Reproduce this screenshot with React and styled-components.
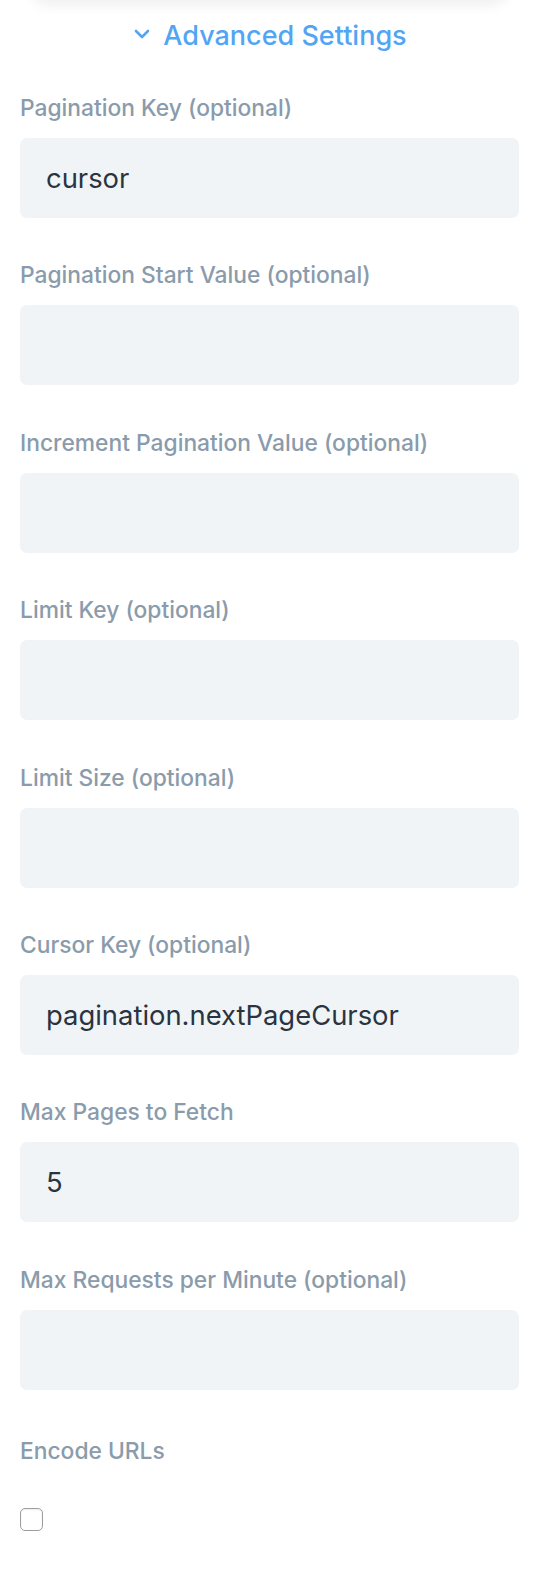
import React from "react";
import styled, { createGlobalStyle } from "styled-components";

const GlobalStyle = createGlobalStyle`
  * { box-sizing: border-box; }
  body {
    margin: 0;
    background: #ffffff;
    font-family: Inter, "Noto Sans", sans-serif;
  }
`;

const Page = styled.div`
  padding: 0 25px 0 20px;
  overflow: hidden;
`;

const CardEdge = styled.div`
  height: 40px;
  margin: -40px 12px 0;
  background: #ffffff;
  border-radius: 16px;
  box-shadow: 0 4px 14px rgba(15, 23, 42, 0.08);
`;

const Toggle = styled.button`
  display: flex;
  align-items: center;
  justify-content: center;
  gap: 11px;
  width: 100%;
  margin-top: 18px;
  padding: 0;
  border: none;
  background: none;
  color: #52a5f5;
  font-family: inherit;
  font-size: 27px;
  font-weight: 500;
  line-height: 36px;
  cursor: pointer;

  svg {
    width: 20px;
    height: 20px;
    margin-top: -4px;
  }
`;

const Fields = styled.div`
  display: flex;
  flex-direction: column;
  gap: 43.4px;
  margin-top: 40px;
`;

const Field = styled.div`
  display: flex;
  flex-direction: column;
  gap: 16px;
  margin-top: ${(p) => (p.$extra ? "4px" : "0")};
`;

const Label = styled.label`
  color: #8a9bab;
  font-size: 22.8px;
  font-weight: 500;
  line-height: 28px;
`;

const Input = styled.input`
  width: 100%;
  height: 80px;
  padding: 0 26px;
  border: none;
  border-radius: 7px;
  background: #f0f4f7;
  color: #2a3441;
  font-family: inherit;
  font-size: 27.4px;
  outline: none;
`;

const Check = styled.input`
  appearance: none;
  width: 23px;
  height: 23px;
  margin: 27px 0 0;
  border: 1px solid #9d9d9d;
  border-radius: 5px;
  background: #ffffff;
  box-shadow: inset 0 1px 2px rgba(0, 0, 0, 0.08);
`;

const fields = [
  { label: "Pagination Key (optional)", value: "cursor" },
  { label: "Pagination Start Value (optional)", value: "" },
  { label: "Increment Pagination Value (optional)", value: "" },
  { label: "Limit Key (optional)", value: "" },
  { label: "Limit Size (optional)", value: "" },
  { label: "Cursor Key (optional)", value: "pagination.nextPageCursor" },
  { label: "Max Pages to Fetch", value: "5" },
  { label: "Max Requests per Minute (optional)", value: "" },
];

const App = () => (
  <>
    <GlobalStyle />
    <Page>
      <CardEdge />
      <Toggle type="button">
        <svg viewBox="0 0 20 20" fill="none" stroke="currentColor" strokeWidth="2.6" strokeLinecap="round" strokeLinejoin="round">
          <path d="M4 7l6 6 6-6" />
        </svg>
        Advanced Settings
      </Toggle>
      <Fields>
        {fields.map((f) => (
          <Field key={f.label}>
            <Label>{f.label}</Label>
            <Input type="text" defaultValue={f.value} />
          </Field>
        ))}
        <Field $extra>
          <Label>Encode URLs</Label>
          <Check type="checkbox" />
        </Field>
      </Fields>
    </Page>
  </>
);

export default App;
